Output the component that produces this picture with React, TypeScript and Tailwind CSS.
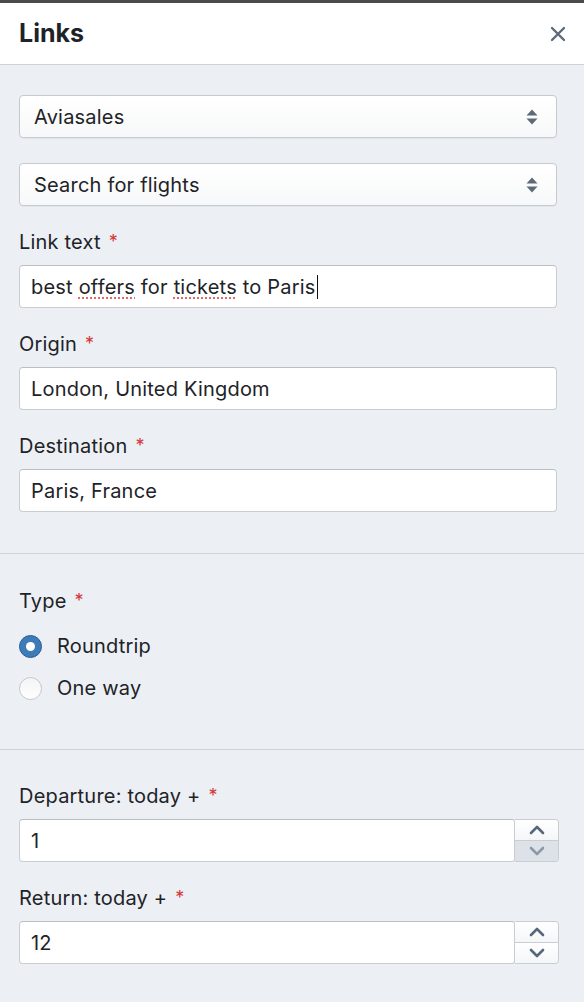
import React from 'react';

const font = { fontFamily: 'Inter, "Liberation Sans", Arial, sans-serif' };

const Req: React.FC = () => <span className="ml-[8px] text-[18px] text-[#d63638] align-[3px]">*</span>;

const Label: React.FC<{ children: React.ReactNode }> = ({ children }) => (
  <div className="flex h-[22px] items-center text-[20px] leading-[22px] tracking-[0.2px] text-[#1e2327]">
    <span>{children}</span>
    <Req />
  </div>
);

const SelectBox: React.FC<{ value: string }> = ({ value }) => (
  <div className="flex h-[43px] items-center justify-between rounded-[4px] border border-[#c5cacf] bg-gradient-to-b from-white to-[#f7f8f9] pl-[14px] pr-[18px] text-[20px] tracking-[0.2px] text-[#1e2327] shadow-[0_1px_1px_rgba(0,0,0,0.04)]">
    <span>{value}</span>
    <svg width="12" height="16" viewBox="0 0 12 16" fill="#5b6b7a">
      <path d="M6 0.5 L11.5 6.5 H0.5 Z" />
      <path d="M6 15.5 L11.5 9.5 H0.5 Z" />
    </svg>
  </div>
);

const TextBox: React.FC<{ children: React.ReactNode }> = ({ children }) => (
  <div className="flex h-[43px] items-center rounded-[4px] border border-[#c8cdd2] border-t-[#b9bec3] bg-white px-[11px] text-[20px] tracking-[0.2px] text-[#1e2327]">
    {children}
  </div>
);

const Chevron: React.FC<{ down?: boolean; color: string }> = ({ down, color }) => (
  <svg width="16" height="10" viewBox="0 0 16 10" fill="none" stroke={color} strokeWidth="2.6" strokeLinecap="round" strokeLinejoin="round">
    {down ? <path d="M2 2 L8 8 L14 2" /> : <path d="M2 8 L8 2 L14 8" />}
  </svg>
);

const NumberBox: React.FC<{ value: string; downActive?: boolean }> = ({ value, downActive }) => (
  <div className="mr-[-2px] flex h-[43px]">
    <div className="flex flex-1 items-center rounded-l-[4px] rounded-r-[3px] border border-[#c8cdd2] border-t-[#b9bec3] bg-white px-[11px] text-[20px] tracking-[0.2px] text-[#1e2327]">
      {value}
    </div>
    <div className="flex w-[44px] flex-col overflow-hidden rounded-r-[4px] border border-l-0 border-[#c8cdd2]">
      <div className="flex flex-1 items-center justify-center border-b border-[#c8cdd2] bg-gradient-to-b from-white to-[#f4f6f8]">
        <Chevron color="#56687a" />
      </div>
      <div className={`flex flex-1 items-center justify-center ${downActive ? 'bg-[#dce2e8]' : 'bg-gradient-to-b from-white to-[#f4f6f8]'}`}>
        <Chevron down color={downActive ? '#8d99a6' : '#56687a'} />
      </div>
    </div>
  </div>
);

const Radio: React.FC<{ checked?: boolean; label: string }> = ({ checked, label }) => (
  <div className="flex h-[42px] items-center">
    {checked ? (
      <span className="flex h-[23px] w-[23px] items-center justify-center rounded-full border border-[#2c5f94] bg-[#3d7bb9]">
        <span className="h-[9px] w-[9px] rounded-full bg-white" />
      </span>
    ) : (
      <span className="h-[23px] w-[23px] rounded-full border border-[#c4c8cc] bg-gradient-to-b from-[#f3f4f5] to-white" />
    )}
    <span className="ml-[15px] text-[20px] tracking-[0.2px] text-[#1e2327]">{label}</span>
  </div>
);

const Squiggle: React.FC<{ children: React.ReactNode }> = ({ children }) => (
  <span className="underline decoration-[#e06a6a] decoration-dotted decoration-2 underline-offset-[4px]">{children}</span>
);

export default function App() {
  return (
    <div className="min-h-[1002px] w-[584px] bg-[#ecf0f4]" style={font}>
      <div className="h-[3px] bg-[#4b4b4b]" />
      <div className="flex h-[62px] items-center justify-between border-b border-[#cdd2d7] bg-white pl-[19px] pr-[18px]">
        <h1 className="text-[25px] font-bold text-[#1e2327]">Links</h1>
        <svg width="16" height="16" viewBox="0 0 16 16" stroke="#5c6b7a" strokeWidth="2.4" strokeLinecap="round">
          <path d="M2 2 L14 14 M14 2 L2 14" />
        </svg>
      </div>

      <div className="flex flex-col gap-[25px] pb-[41px] pl-[19px] pr-[27px] pt-[30px]">
        <SelectBox value="Aviasales" />
        <SelectBox value="Search for flights" />
        <div className="flex flex-col gap-[12px]">
          <Label>Link text</Label>
          <TextBox>
            <span>
              best <Squiggle>offers</Squiggle> for <Squiggle>tickets</Squiggle> to Paris
            </span>
            <span className="ml-[1px] h-[24px] w-[1.5px] bg-[#111]" />
          </TextBox>
        </div>
        <div className="flex flex-col gap-[12px]">
          <Label>Origin</Label>
          <TextBox>London, United Kingdom</TextBox>
        </div>
        <div className="flex flex-col gap-[12px]">
          <Label>Destination</Label>
          <TextBox>Paris, France</TextBox>
        </div>
      </div>

      <div className="border-t border-[#cfd4d9] pb-[40px] pl-[19px] pr-[27px] pt-[36px]">
        <Label>Type</Label>
        <div className="mt-[13px]">
          <Radio checked label="Roundtrip" />
          <Radio label="One way" />
        </div>
      </div>

      <div className="flex flex-col gap-[25px] border-t border-[#cfd4d9] pb-[36px] pl-[19px] pr-[27px] pt-[35px]">
        <div className="flex flex-col gap-[12px]">
          <Label>Departure: today +</Label>
          <NumberBox value="1" downActive />
        </div>
        <div className="flex flex-col gap-[12px]">
          <Label>Return: today +</Label>
          <NumberBox value="12" />
        </div>
      </div>
    </div>
  );
}
